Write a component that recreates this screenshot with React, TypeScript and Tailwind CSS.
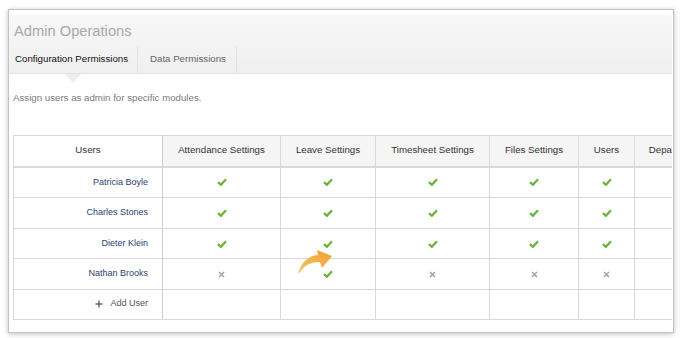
import React from "react";

const columns = [
  { label: "Attendance Settings", w: "w-[118px]" },
  { label: "Leave Settings", w: "w-[95px]" },
  { label: "Timesheet Settings", w: "w-[114px]" },
  { label: "Files Settings", w: "w-[89px]" },
  { label: "Users", w: "w-[56px]" },
  { label: "Departments", w: "w-[84px]" },
];

type Mark = "y" | "n" | "";

const rows: { name: string; marks: Mark[]; h: string }[] = [
  { name: "Patricia Boyle", marks: ["y", "y", "y", "y", "y", ""], h: "h-[31px]" },
  { name: "Charles Stones", marks: ["y", "y", "y", "y", "y", ""], h: "h-[31px]" },
  { name: "Dieter Klein", marks: ["y", "y", "y", "y", "y", ""], h: "h-[30px]" },
  { name: "Nathan Brooks", marks: ["n", "y", "n", "n", "n", ""], h: "h-[31px]" },
];

const Check = () => (
  <svg width="10" height="8" viewBox="0 0 10 8" className="inline-block">
    <path d="M1 4.2 L3.9 6.8 L9 1.2" fill="none" stroke="#6bb43c" strokeWidth="2.3" strokeLinejoin="miter" />
  </svg>
);

const Cross = () => (
  <svg width="7" height="7" viewBox="0 0 7 7" className="inline-block">
    <path d="M1 1 L6 6 M6 1 L1 6" fill="none" stroke="#a3a3a3" strokeWidth="1.5" />
  </svg>
);

export default function App() {
  return (
    <div className="w-[683px] h-[338px] bg-white pt-[9px] pl-[8px] font-['Liberation_Sans',Arial,sans-serif] relative">
      <div className="w-[666px] h-[324px] bg-white border border-[#c2c2c2] shadow-[0_1px_5px_rgba(0,0,0,0.25)] flex flex-col">
        <div className="mt-[5px] mr-[1px] h-[59px] bg-gradient-to-b from-[#f7f7f7] to-[#efefef] border-b border-[#e3e3e3] flex flex-col relative">
          <div className="h-[31px] pl-[5px] pt-[8px] text-[14.7px] leading-[17px] text-[#a9a9a9]">Admin Operations</div>
          <div className="flex h-[28px]">
            <div className="w-[129px] pl-[6px] pt-[7px] text-[9.7px] leading-[12px] text-[#111] border-r border-[#e2e2e2] relative">
              Configuration Permissions
              <div className="absolute left-[56px] top-[28px] w-0 h-0 border-l-[8px] border-r-[8px] border-t-[9px] border-l-transparent border-r-transparent border-t-[#ededed]" />
            </div>
            <div className="w-[99px] pl-[12px] pt-[7px] text-[9.7px] leading-[12px] text-[#666] border-r border-[#e2e2e2]">
              Data Permissions
            </div>
          </div>
        </div>
        <div className="mt-[18px] pl-[4px] text-[9.7px] leading-[12px] text-[#7a7a7a]">
          Assign users as admin for specific modules.
        </div>
        <div className="mt-[31px] ml-[4px] mr-[1px] overflow-hidden">
          <table className="border-collapse table-fixed text-[9.7px] w-[705px]">
            <colgroup>
              <col className="w-[149px]" />
              {columns.map((c) => (
                <col key={c.label} className={c.w} />
              ))}
            </colgroup>
            <thead>
              <tr className="h-[31px]">
                <th className="bg-white border border-[#d6d9e0] border-b-2 border-r-[#c9cdd6] font-normal text-[#333]">Users</th>
                {columns.map((c) => (
                  <th key={c.label} className="bg-[#f5f5f5] border border-[#d6d9e0] border-b-2 font-normal text-[#333] whitespace-nowrap">
                    {c.label}
                  </th>
                ))}
              </tr>
            </thead>
            <tbody>
              {rows.map((r) => (
                <tr key={r.name} className={r.h}>
                  <td className="border border-[#d6d9e0] border-r-[#c9cdd6] text-right pr-[14px] text-[9px] text-[#2b4270]">{r.name}</td>
                  {r.marks.map((m, i) => (
                    <td key={i} className="border border-[#d6d9e0] text-center align-middle">
                      <div className="flex justify-center items-center">
                        {m === "y" ? <Check /> : m === "n" ? <Cross /> : null}
                      </div>
                    </td>
                  ))}
                </tr>
              ))}
              <tr className="h-[30px]">
                <td className="border border-[#d6d9e0] border-r-[#c9cdd6] text-right pr-[14px] text-[9px] text-[#555]">
                  <span className="inline-flex items-center gap-[7px]">
                    <svg width="8" height="8" viewBox="0 0 8 8">
                      <path d="M4 0.5 V7.5 M0.5 4 H7.5" stroke="#666" strokeWidth="1.4" />
                    </svg>
                    Add User
                  </span>
                </td>
                {columns.map((c) => (
                  <td key={c.label} className="border border-[#d6d9e0]" />
                ))}
              </tr>
            </tbody>
          </table>
        </div>
      </div>
      <svg className="absolute left-[296px] top-[248px]" width="38" height="28" viewBox="0 0 38 28">
        <defs>
          <linearGradient id="ar" x1="0" y1="1" x2="1" y2="0">
            <stop offset="0" stopColor="#f7c266" />
            <stop offset="1" stopColor="#f0a032" />
          </linearGradient>
        </defs>
        <path d="M2 25 Q8 8 22 7 L21 2 L36 8 L26 20 L24 14 Q11 13 3 25 Z" fill="url(#ar)" />
      </svg>
    </div>
  );
}
